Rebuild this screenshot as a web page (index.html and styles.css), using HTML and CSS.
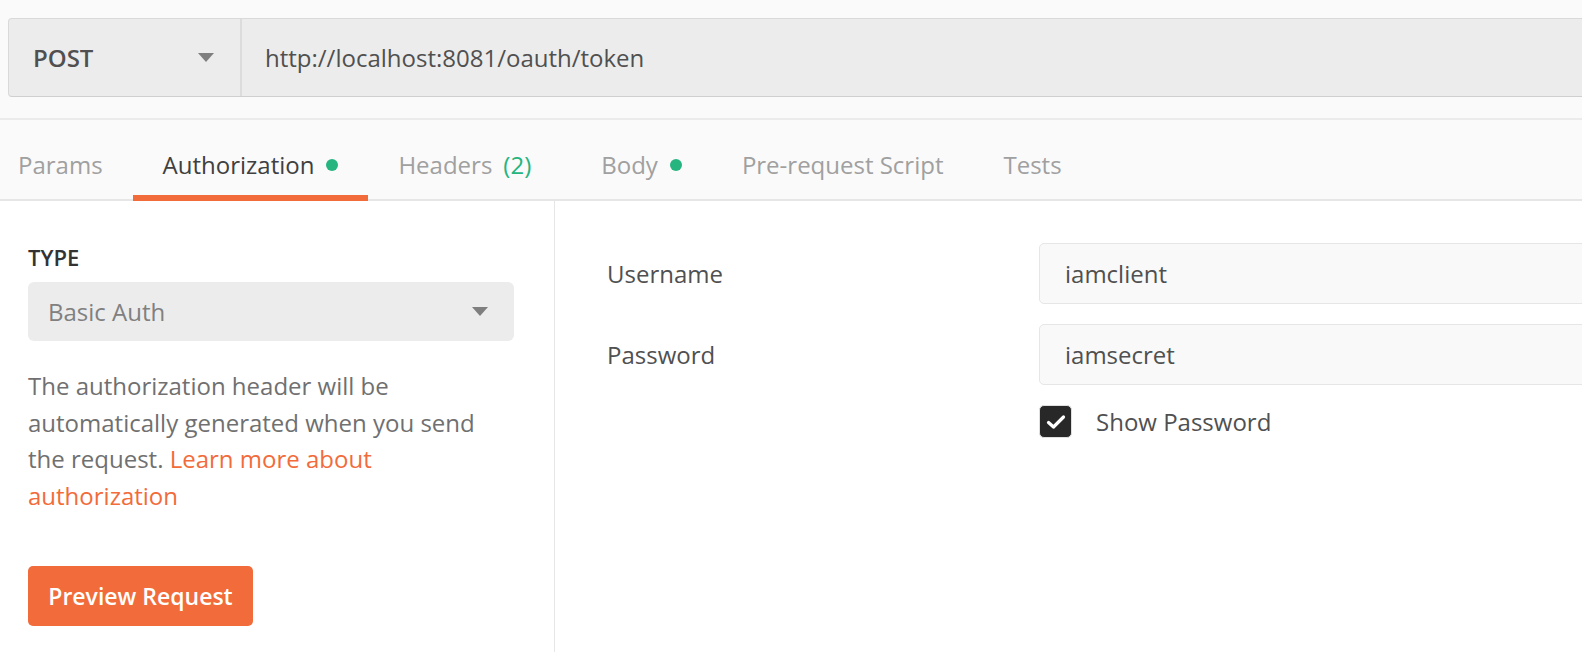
FILE: index.html
```html
<!DOCTYPE html>
<html>
<head>
<meta charset="utf-8">
<link rel="stylesheet" href="styles.css">
</head>
<body>
<div class="top">
  <div class="urlbar">
    <div class="method">
      <span class="method-name">POST</span>
      <span class="caret"></span>
    </div>
    <div class="url">http://localhost:8081/oauth/token</div>
  </div>
</div>
<div class="tabs">
  <div class="tab first">Params</div>
  <div class="tab active">Authorization <span class="dot"></span></div>
  <div class="tab headers">Headers <span class="count">(2)</span></div>
  <div class="tab">Body <span class="dot"></span></div>
  <div class="tab">Pre-request Script</div>
  <div class="tab">Tests</div>
</div>
<div class="panels">
  <div class="left">
    <div class="type-label">TYPE</div>
    <div class="select">
      <span>Basic Auth</span>
      <span class="caret"></span>
    </div>
    <p class="desc">The authorization header will be automatically generated when you send the request. <a class="link">Learn more about authorization</a></p>
    <button class="preview">Preview Request</button>
  </div>
  <div class="right">
    <div class="row">
      <div class="label">Username</div>
      <div class="input">iamclient</div>
    </div>
    <div class="row">
      <div class="label">Password</div>
      <div class="input">iamsecret</div>
    </div>
    <div class="row check-row">
      <div class="label"></div>
      <div class="check">
        <span class="box">
          <svg width="20" height="16" viewBox="0 0 20 16"><path d="M2.5 8.5 L7.5 13 L17.5 3" fill="none" stroke="#fff" stroke-width="3.2" stroke-linecap="round" stroke-linejoin="round"/></svg>
        </span>
        <span class="check-text">Show Password</span>
      </div>
    </div>
  </div>
</div>
</body>
</html>
```
FILE: styles.css
```css
* { box-sizing: border-box; }
html, body { margin: 0; padding: 0; }
body {
  background: #ffffff;
  font-family: "Open Sans", "Noto Sans", sans-serif;
  font-size: 24px;
  color: #505050;
  overflow: hidden;
  width: 1582px;
  height: 652px;
}
.top {
  background: #fafafa;
  padding: 18px 0 21px 8px;
  border-bottom: 2px solid #ebebeb;
}
.urlbar {
  display: flex;
  height: 79px;
  margin-right: -20px;
  background: #ececec;
  border: 1px solid #d9d9d9;
  border-bottom-color: #cfcfcf;
  border-radius: 4px 0 0 4px;
}
.method {
  width: 233px;
  flex: none;
  display: flex;
  align-items: center;
  justify-content: space-between;
  padding: 0 26px 0 24px;
  border-right: 2px solid #dcdcdc;
}
.method-name {
  font-weight: 600;
  color: #505050;
}
.caret {
  width: 0;
  height: 0;
  border-left: 8px solid transparent;
  border-right: 8px solid transparent;
  border-top: 9px solid #7f7f7f;
}
.url {
  display: flex;
  align-items: center;
  padding-left: 23px;
  color: #505050;
}
.tabs {
  display: flex;
  background: #fafafa;
  height: 81px;
  padding-left: 18px;
  border-bottom: 2px solid #e6e6e6;
}
.tab {
  display: flex;
  align-items: center;
  padding: 9px 30px 0;
  color: #a0a0a0;
  position: relative;
}
.tab.first { padding-left: 0; }
.tab.headers { padding-right: 40px; }
.tab.active { color: #404040; }
.tab.active::after {
  content: "";
  position: absolute;
  left: 0;
  right: 0;
  bottom: -2px;
  height: 6px;
  background: #f26b3a;
}
.dot {
  display: inline-block;
  width: 12px;
  height: 12px;
  border-radius: 50%;
  background: #26b47f;
  margin-left: 12px;
  margin-top: 2px;
}
.count {
  color: #26b47f;
  margin-left: 11px;
}
.panels {
  display: flex;
  height: 452px;
}
.left {
  width: 555px;
  flex: none;
  border-right: 1px solid #e6e6e6;
  padding: 45px 45px 0 28px;
}
.type-label {
  font-weight: 600;
  font-size: 22px;
  color: #333;
  line-height: 22px;
}
.select {
  margin-top: 14px;
  height: 59px;
  width: 486px;
  background: #ececec;
  border-radius: 6px;
  display: flex;
  align-items: center;
  justify-content: space-between;
  padding: 0 26px 0 20px;
  color: #808080;
}
.desc {
  margin: 27px 0 0;
  line-height: 36.7px;
  color: #707070;
  width: 480px;
}
.link { color: #f26b3a; }
.preview {
  margin-top: 51px;
  width: 225px;
  height: 60px;
  background: #f26b3a;
  border: none;
  border-radius: 5px;
  color: #fff;
  font-family: "Open Sans", "Noto Sans", sans-serif;
  font-size: 23px;
  font-weight: 600;
  padding: 0;
}
.right {
  flex: 1;
  padding: 42px 0 0 52px;
}
.row {
  display: flex;
  align-items: center;
  margin-bottom: 20px;
}
.label {
  width: 432px;
  flex: none;
  color: #505050;
}
.input {
  flex: 1;
  height: 61px;
  margin-right: -20px;
  background: #f9f9f9;
  border: 1.5px solid #e6e6e6;
  border-radius: 5px;
  display: flex;
  align-items: center;
  padding-left: 25px;
  color: #505050;
}
.check {
  display: flex;
  align-items: center;
}
.box {
  width: 33px;
  height: 33px;
  background: #282828;
  border: 1.5px solid #e0e0e0;
  border-radius: 5px;
  display: flex;
  align-items: center;
  justify-content: center;
}
.check-text {
  margin-left: 24px;
  color: #505050;
}
```
